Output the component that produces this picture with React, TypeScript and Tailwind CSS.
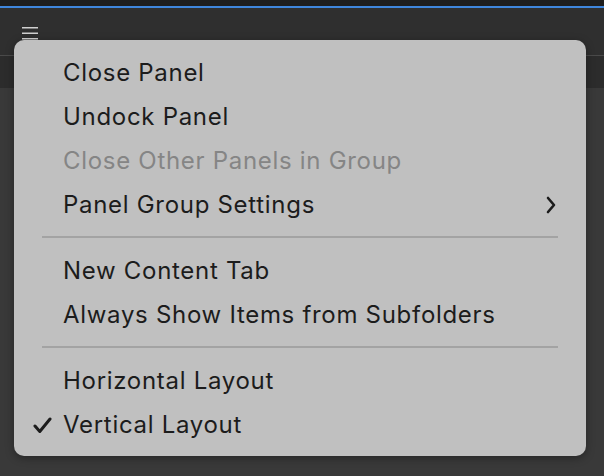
import React from 'react';

type Item = { label: string; disabled?: boolean; submenu?: boolean; checked?: boolean };

const groups: Item[][] = [
  [
    { label: 'Close Panel' },
    { label: 'Undock Panel' },
    { label: 'Close Other Panels in Group', disabled: true },
    { label: 'Panel Group Settings', submenu: true },
  ],
  [{ label: 'New Content Tab' }, { label: 'Always Show Items from Subfolders' }],
  [{ label: 'Horizontal Layout' }, { label: 'Vertical Layout', checked: true }],
];

export default function App() {
  return (
    <div
      className="w-[604px] h-[476px] bg-[#393939] overflow-hidden flex flex-col"
      style={{ fontFamily: 'Inter, "Noto Sans", sans-serif' }}
    >
      {/* Top chrome */}
      <div className="h-[6px] bg-[#1e1e1e]" />
      <div className="h-[2px] bg-[#3f86dc]" />
      <div className="h-[47px] bg-[#2f2f2f] flex items-center pl-[22px]">
        <svg width="16" height="14" viewBox="0 0 16 14" className="mt-[2px]">
          <rect x="0" y="1" width="16" height="1.5" fill="#d0d0d0" />
          <rect x="0" y="6.5" width="16" height="1.5" fill="#d0d0d0" />
          <rect x="0" y="12" width="16" height="1.5" fill="#d0d0d0" />
        </svg>
      </div>
      <div className="h-px bg-[#4a4a4a]" />
      <div className="h-[32px] bg-[#2c2c2c]" />

      {/* Menu */}
      <div className="relative">
        <div className="absolute left-[14px] top-[-48px] w-[572px] h-[416px] bg-[#c0c0c0] rounded-[10px] shadow-[0_2px_8px_rgba(0,0,0,0.35)] pt-[11px]">
          {groups.map((group, gi) => (
            <div key={gi}>
              {gi > 0 && <div className="mx-[28px] mt-[9px] mb-[11px] h-[2px] bg-[#a3a3a3]" />}
              {group.map((item) => (
                <div
                  key={item.label}
                  className={`relative h-[44px] flex items-center pl-[49px] pr-[30px] text-[24px] tracking-[0.7px] ${
                    item.disabled ? 'text-[#858585]' : 'text-[#1c1c1c]'
                  }`}
                >
                  {item.checked && (
                    <svg width="19" height="17" viewBox="0 0 19 17" className="absolute left-[19px] top-[14px]">
                      <path d="M2 9 L6.8 14.5 L17 2" fill="none" stroke="#1c1c1c" strokeWidth="3" strokeLinecap="round" strokeLinejoin="round" />
                    </svg>
                  )}
                  <span className="flex-1">{item.label}</span>
                  {item.submenu && (
                    <svg width="10" height="18" viewBox="0 0 10 18" className="-mt-[1px]">
                      <path d="M2 2 L8 9 L2 16" fill="none" stroke="#1c1c1c" strokeWidth="2.6" strokeLinecap="round" strokeLinejoin="round" />
                    </svg>
                  )}
                </div>
              ))}
            </div>
          ))}
        </div>
      </div>
    </div>
  );
}
